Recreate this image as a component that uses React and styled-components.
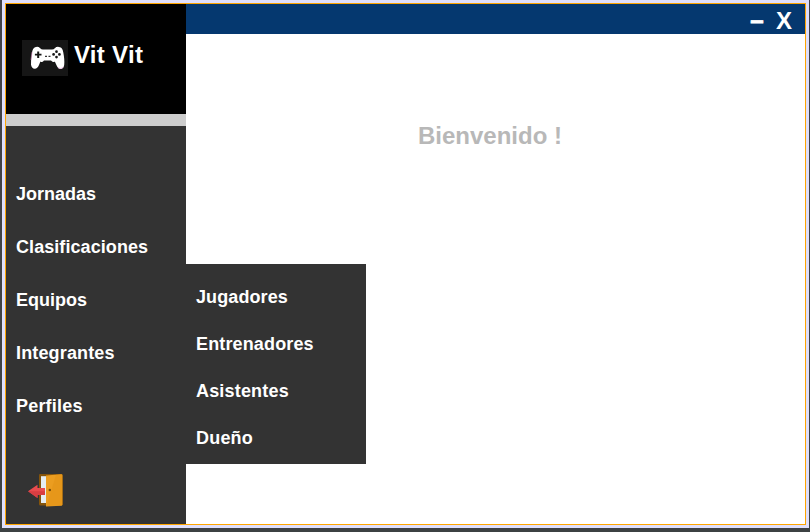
import React from "react";
import styled, { createGlobalStyle } from "styled-components";

const GlobalStyle = createGlobalStyle`
  * { box-sizing: border-box; }
  body { margin: 0; background: #404345; overflow: hidden; }
`;

const Desktop = styled.div`
  height: 532px;
  width: 810px;
  padding: 0 1px 4px 2px;
  background: linear-gradient(#414249, #3c4143);
  font-family: "Liberation Sans", Arial, sans-serif;
  font-weight: bold;
  color: #fff;
`;

const Frame = styled.div`
  height: 528px;
  padding: 3px;
  background: #dfdffc;
`;

const Window = styled.div`
  display: grid;
  grid-template-columns: 180px 1fr;
  height: 522px;
  border: 1px solid #ffa500;
  background: #fff;
`;

const Sidebar = styled.aside`
  display: flex;
  flex-direction: column;
  background: #333;
`;

const Brand = styled.div`
  display: flex;
  height: 110px;
  padding: 36px 0 0 16px;
  gap: 6px;
  background: #000;
`;

const BrandName = styled.div`
  font-size: 24px;
  line-height: 30px;
  letter-spacing: 0.3px;
  white-space: nowrap;
`;

const Divider = styled.div`
  height: 12px;
  background: #cdcdcd;
`;

const Menu = styled.nav`
  display: flex;
  flex-direction: column;
  padding: ${(p) => p.$padding};
`;

const MenuItem = styled.a`
  height: ${(p) => p.$height}px;
  line-height: ${(p) => p.$height}px;
  font-size: 18px;
  letter-spacing: ${(p) => p.$tracking}px;
`;

const ExitButton = styled.button`
  width: 36px;
  height: 34px;
  margin: 40px 0 0 22px;
  padding: 0;
  border: 0;
  background: none;
  svg { display: block; }
`;

const Main = styled.main`
  display: flex;
  flex-direction: column;
  min-width: 0;
`;

const TitleBar = styled.header`
  display: flex;
  justify-content: flex-end;
  height: 30px;
  padding-right: 13px;
  background: #05386f;
`;

const WindowButton = styled.button`
  width: 16px;
  height: ${(p) => p.$height}px;
  margin-left: 11px;
  padding: 0;
  border: 0;
  background: none;
  color: #fff;
  font: bold 24px "Liberation Sans", Arial, sans-serif;
  line-height: ${(p) => p.$height}px;
  -webkit-text-stroke: ${(p) => p.$stroke || 0}px #fff;
`;

const Welcome = styled.h1`
  height: 30px;
  margin: 87px 0 0 232px;
  color: #b8b8b8;
  font-size: 24px;
  line-height: 30px;
`;

const Submenu = styled.div`
  width: 180px;
  height: 200px;
  margin-top: 113px;
  background: #333;
`;

function Gamepad() {
  return (
    <svg width="46" height="36" viewBox="0 0 46 36">
      <rect width="46" height="36" fill="#161616" />
      <path
        d="M13 7.2Q16 6 18.2 8.2Q19.2 9.5 21 9.5H30Q31.8 9.5 32.8 8.2Q35 6 38 7.2Q40.5 8 41.2 12Q42.8 20 42.2 25Q41.6 29 38.5 29Q36 29 34.4 25L32.8 21.5Q31.5 23 29 20.5H22Q20 23 18.4 21.5L17 25Q15.2 29 12.7 28.8Q9.5 28.5 9 24.5Q8.8 19 10 12.5Q10.8 8.2 13 7.2Z"
        fill="#fff"
      />
      <path d="M10 12L9 20" stroke="#c878b0" strokeWidth="0.6" />
      <path d="M36 27.7Q39 29.8 41.5 27" fill="none" stroke="#e8a9dc" strokeWidth="0.7" />
      <path
        d="M15.2 11.5h2v2.2h2.3v1.9h-2.3v2.3h-2v-2.3h-2.3v-1.9h2.3z"
        fill="#161616"
      />
      <path d="M23 16.3h2M26.5 16.3h2" stroke="#333" strokeWidth="1.2" />
      <g fill="#161616">
        <circle cx="34.5" cy="11.7" r="1.35" />
        <circle cx="34.5" cy="17.1" r="1.35" />
        <circle cx="31.6" cy="14.4" r="1.35" />
        <circle cx="37.4" cy="14.4" r="1.35" />
      </g>
    </svg>
  );
}

function ExitDoor() {
  return (
    <svg width="36" height="34" viewBox="0 0 36 34">
      <path d="M12 1H33.4Q34.8 1 34.8 2.4V31Q34.8 32.4 33.4 32.4H12Q11 32.4 11 31V2.4Q11 1 12 1Z" fill="#85540b" />
      <path d="M13 3.2H19V30H13Z" fill="#e5edf2" />
      <path d="M18 2.4L33 1.2Q34.4 1.1 34.4 2.4V31.4Q34.4 32.7 33 32.8L18 33.5Z" fill="#eb9d20" />
      <path d="M28 1.7L34 1.2V32.2L18.5 33Z" fill="#df9014" opacity=".45" />
      <circle cx="21.8" cy="17" r="1.2" fill="#704908" />
      <path d="M0 18.2L9.5 11.8V14.9H17V21.9H9.5V25Z" fill="#e94b4e" />
      <path d="M0 18.2H17V21.9H9.5V25Z" fill="#d83e42" />
    </svg>
  );
}

const sections = [
  { label: "Jornadas", tracking: 0 },
  { label: "Clasificaciones", tracking: 0.07 },
  { label: "Equipos", tracking: 0 },
  { label: "Integrantes", tracking: 0.15 },
  { label: "Perfiles", tracking: 0.2 },
];

const members = [
  { label: "Jugadores", tracking: 0.1 },
  { label: "Entrenadores", tracking: 0.14 },
  { label: "Asistentes", tracking: 0.18 },
  { label: "Dueño", tracking: 0.2 },
];

export default function App() {
  return (
    <>
      <GlobalStyle />
      <Desktop>
        <Frame>
          <Window>
            <Sidebar>
              <Brand>
                <Gamepad />
                <BrandName>Vit Vit</BrandName>
              </Brand>
              <Divider />
              <Menu $padding="42px 0 0 10px">
                {sections.map((s) => (
                  <MenuItem key={s.label} $height={53} $tracking={s.tracking}>
                    {s.label}
                  </MenuItem>
                ))}
              </Menu>
              <ExitButton aria-label="Salir">
                <ExitDoor />
              </ExitButton>
            </Sidebar>
            <Main>
              <TitleBar>
                <WindowButton $height={31} $stroke={0.8}>–</WindowButton>
                <WindowButton $height={33}>X</WindowButton>
              </TitleBar>
              <Welcome>Bienvenido !</Welcome>
              <Submenu>
                <Menu $padding="10px 0 0 10px">
                  {members.map((m) => (
                    <MenuItem key={m.label} $height={47} $tracking={m.tracking}>
                      {m.label}
                    </MenuItem>
                  ))}
                </Menu>
              </Submenu>
            </Main>
          </Window>
        </Frame>
      </Desktop>
    </>
  );
}
